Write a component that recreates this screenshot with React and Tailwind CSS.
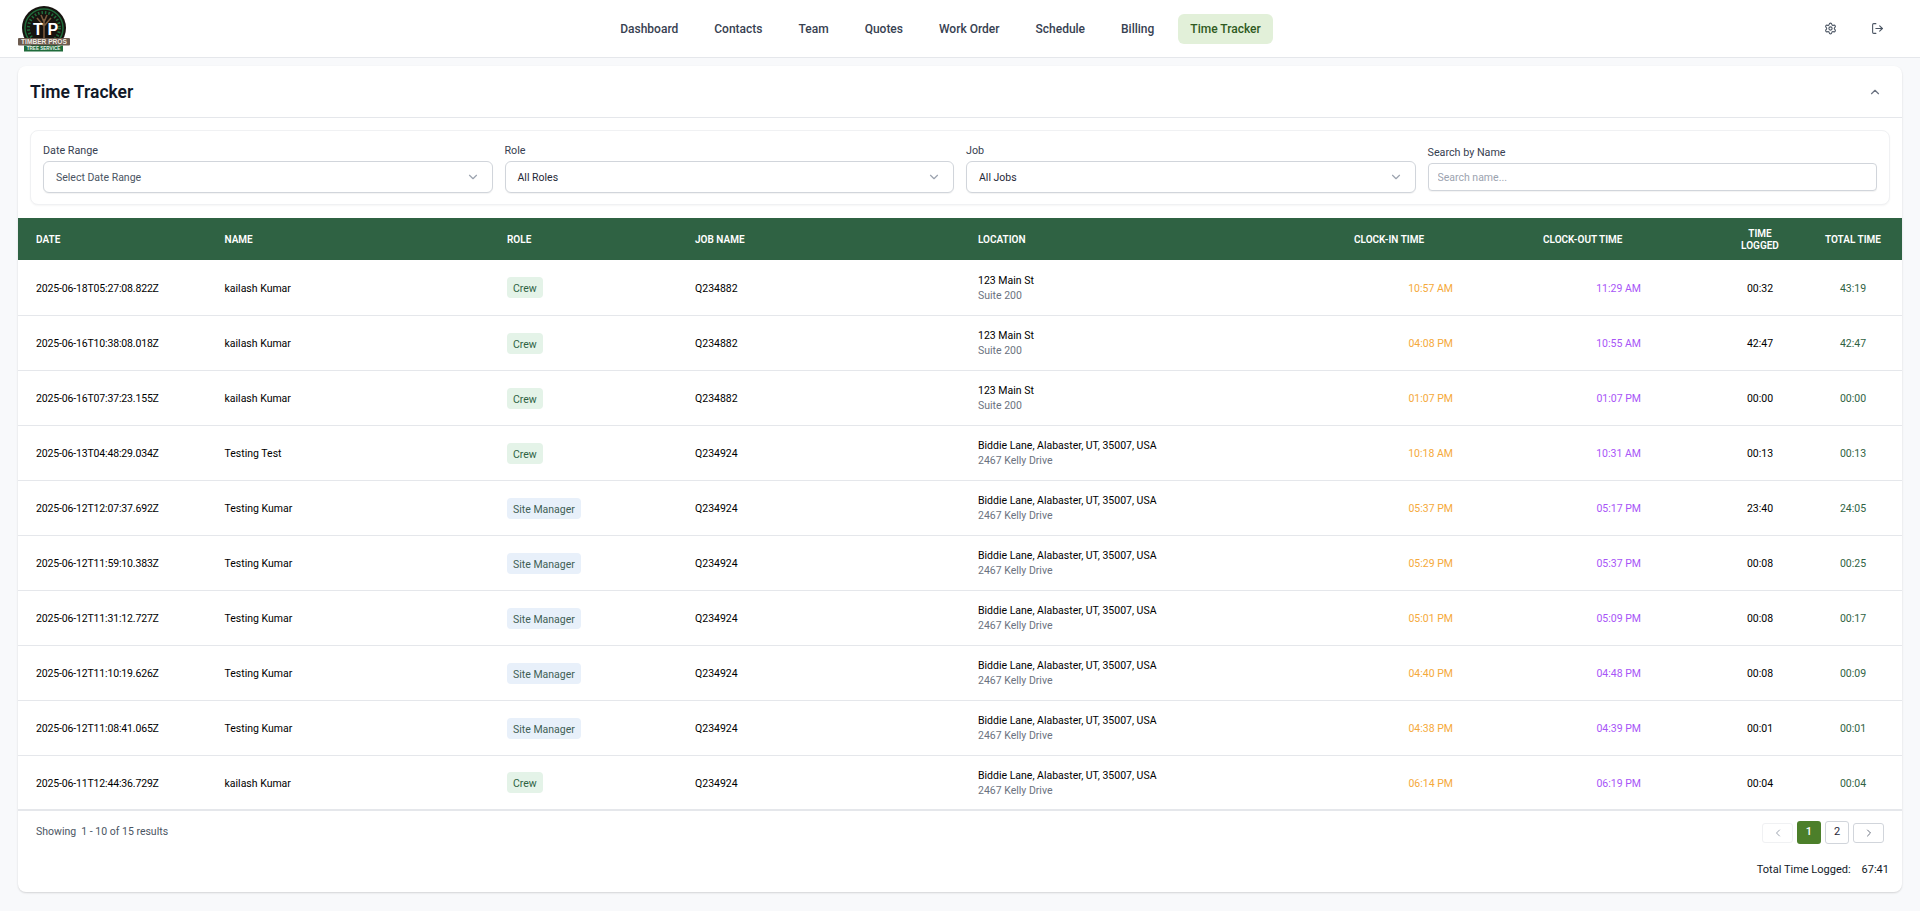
import { ChevronDown, ChevronUp, ChevronLeft, ChevronRight, Settings, LogOut } from "lucide-react";

const navItems = ["Dashboard", "Contacts", "Team", "Quotes", "Work Order", "Schedule", "Billing", "Time Tracker"];

const main = { street: "123 Main St", sub: "Suite 200" };
const biddie = { street: "Biddie Lane, Alabaster, UT, 35007, USA", sub: "2467 Kelly Drive" };

const rows = [
  { date: "2025-06-18T05:27:08.822Z", name: "kailash Kumar", role: "Crew", job: "Q234882", loc: main, inn: "10:57 AM", out: "11:29 AM", logged: "00:32", total: "43:19" },
  { date: "2025-06-16T10:38:08.018Z", name: "kailash Kumar", role: "Crew", job: "Q234882", loc: main, inn: "04:08 PM", out: "10:55 AM", logged: "42:47", total: "42:47" },
  { date: "2025-06-16T07:37:23.155Z", name: "kailash Kumar", role: "Crew", job: "Q234882", loc: main, inn: "01:07 PM", out: "01:07 PM", logged: "00:00", total: "00:00" },
  { date: "2025-06-13T04:48:29.034Z", name: "Testing Test", role: "Crew", job: "Q234924", loc: biddie, inn: "10:18 AM", out: "10:31 AM", logged: "00:13", total: "00:13" },
  { date: "2025-06-12T12:07:37.692Z", name: "Testing Kumar", role: "Site Manager", job: "Q234924", loc: biddie, inn: "05:37 PM", out: "05:17 PM", logged: "23:40", total: "24:05" },
  { date: "2025-06-12T11:59:10.383Z", name: "Testing Kumar", role: "Site Manager", job: "Q234924", loc: biddie, inn: "05:29 PM", out: "05:37 PM", logged: "00:08", total: "00:25" },
  { date: "2025-06-12T11:31:12.727Z", name: "Testing Kumar", role: "Site Manager", job: "Q234924", loc: biddie, inn: "05:01 PM", out: "05:09 PM", logged: "00:08", total: "00:17" },
  { date: "2025-06-12T11:10:19.626Z", name: "Testing Kumar", role: "Site Manager", job: "Q234924", loc: biddie, inn: "04:40 PM", out: "04:48 PM", logged: "00:08", total: "00:09" },
  { date: "2025-06-12T11:08:41.065Z", name: "Testing Kumar", role: "Site Manager", job: "Q234924", loc: biddie, inn: "04:38 PM", out: "04:39 PM", logged: "00:01", total: "00:01" },
  { date: "2025-06-11T12:44:36.729Z", name: "kailash Kumar", role: "Crew", job: "Q234924", loc: biddie, inn: "06:14 PM", out: "06:19 PM", logged: "00:04", total: "00:04" },
];

function Logo() {
  return (
    <svg width="52" height="46" viewBox="0 0 52 46">
      <circle cx="26" cy="22" r="22" fill="#17130f" />
      <circle cx="26" cy="22" r="19" fill="none" stroke="#1f6b3a" strokeWidth="1.5" />
      <circle cx="26" cy="22" r="15.5" fill="none" stroke="#1f6b3a" strokeWidth="3" strokeDasharray="1.5 2" />
      <path d="M26 36V13M26 20l-7-8M26 20l7-8M26 16l-3-7M26 16l3-7" stroke="#7a5a3c" strokeWidth="1.6" fill="none" />
      <text x="15" y="29" fontSize="16" fontWeight="700" fill="#fff" fontFamily="Liberation Sans, sans-serif">T</text>
      <text x="29.5" y="29" fontSize="16" fontWeight="700" fill="#fff" fontFamily="Liberation Sans, sans-serif">P</text>
      <rect x="0" y="32" width="52" height="7.5" rx="1" fill="#6d5c50" />
      <text x="26" y="38" fontSize="6.6" fontWeight="700" fill="#efe9e2" textAnchor="middle" fontFamily="Liberation Sans, sans-serif">TIMBER PROS</text>
      <rect x="6" y="39.5" width="39" height="6" fill="#1f6b3a" />
      <text x="25.5" y="44" fontSize="4.6" fontWeight="700" fill="#e8f3ea" textAnchor="middle" fontFamily="Liberation Sans, sans-serif">TREE SERVICE</text>
    </svg>
  );
}

function SelectBox({ label, value, muted }) {
  return (
    <div>
      <div className="h-[18px] pt-px text-[10.75px] leading-[14px] text-[#374151]">{label}</div>
      <div className="flex h-8 items-center justify-between rounded-md border border-[#d1d5db] bg-white pl-3 pr-3 shadow-[0_1px_1px_rgba(0,0,0,0.05)]">
        <span className={`pt-[2px] text-[10.5px] ${muted ? "text-[#4b5563]" : "text-[#1f2937]"}`}>{value}</span>
        <ChevronDown size={14} className="text-[#9ca3af]" />
      </div>
    </div>
  );
}

function RoleBadge({ role }) {
  const crew = role === "Crew";
  return (
    <span className={`inline-block h-[21px] rounded-[4px] px-[6px] pt-px text-[10.5px] leading-[21px] ${crew ? "bg-[#e4f3e8] text-[#2f6243]" : "bg-[#e8f0fa] text-[#3f5f55]"}`}>
      {role}
    </span>
  );
}

export default function App() {
  return (
    <div className="flex h-[911px] flex-col overflow-hidden bg-[#f8f9fb] font-['Roboto',sans-serif] text-black">
      {/* Navbar */}
      <header className="flex h-[58px] items-center justify-between border-b border-[#e5e7eb] bg-white pl-[18px] pr-6">
        <Logo />
        <nav className="flex gap-3">
          {navItems.map((item) => (
            <a
              key={item}
              className={`flex h-[30px] items-center rounded-md px-3 pt-px text-[12px] font-medium ${
                item === "Time Tracker" ? "bg-[#e2f0d9] text-[#2f5a22]" : "text-[#374151]"
              }`}
            >
              {item}
            </a>
          ))}
        </nav>
        <div className="flex gap-[9px]">
          <button className="flex h-8 w-[38px] items-center justify-center text-[#4b5563]">
            <Settings size={13} />
          </button>
          <button className="flex h-8 w-[38px] items-center justify-center text-[#4b5563]">
            <LogOut size={13} />
          </button>
        </div>
      </header>

      {/* Card */}
      <main className="mx-[18px] mt-2 flex h-[826px] flex-col rounded-lg bg-white shadow-[0_1px_2px_rgba(0,0,0,0.15)]">
        <div className="flex h-[52px] items-center justify-between border-b border-[#e5e7eb] pl-3 pr-5">
          <h1 className="pt-[2px] text-[17.5px] font-semibold text-[#111827]">Time Tracker</h1>
          <ChevronUp size={14} className="text-[#6b7280]" />
        </div>

        {/* Filters */}
        <div className="mx-3 mt-3 grid h-[75px] grid-cols-4 gap-3 rounded-lg border border-[#f0f1f3] bg-white px-3 pt-3 shadow-[0_1px_2px_rgba(0,0,0,0.04)]">
          <SelectBox label="Date Range" value="Select Date Range" muted />
          <SelectBox label="Role" value="All Roles" />
          <SelectBox label="Job" value="All Jobs" />
          <div>
            <div className="h-5 pt-[3px] text-[10.75px] leading-[14px] text-[#374151]">Search by Name</div>
            <input
              placeholder="Search name..."
              className="h-[28px] w-full rounded border border-[#d1d5db] bg-white px-[9px] text-[10.5px] shadow-[0_1px_1px_rgba(0,0,0,0.05)] placeholder:text-[#9ca3af]"
            />
          </div>
        </div>

        {/* Table */}
        <table className="mt-[13px] w-full table-fixed border-collapse text-[10.5px]">
          <colgroup>
            <col className="w-[188.5px]" />
            <col className="w-[282.5px]" />
            <col className="w-[188px]" />
            <col className="w-[283px]" />
            <col className="w-[376px]" />
            <col className="w-[189px]" />
            <col className="w-[191px]" />
            <col className="w-[88px]" />
            <col className="w-[98px]" />
          </colgroup>
          <thead>
            <tr className="h-[42px] bg-[#2f6243] text-left text-[10px] font-semibold uppercase leading-3 text-white">
              <th className="pl-[18px] pt-[2px] font-semibold">Date</th>
              <th className="pl-[18px] pt-[2px] font-semibold">Name</th>
              <th className="pl-[18px] pt-[2px] font-semibold">Role</th>
              <th className="pl-[18px] pt-[2px] font-semibold">Job Name</th>
              <th className="pl-[18px] pt-[2px] font-semibold">Location</th>
              <th className="pl-[18px] pt-[2px] font-semibold">Clock-In Time</th>
              <th className="pl-[18px] pt-[2px] font-semibold">Clock-Out Time</th>
              <th className="pt-[2px] text-center font-semibold">Time<br />Logged</th>
              <th className="pt-[2px] text-center font-semibold">Total Time</th>
            </tr>
          </thead>
          <tbody>
            {rows.map((r) => (
              <tr key={r.date} className="h-[55px] border-b border-[#e5e7eb] last:border-b-2">
                <td className="pl-[18px] pt-[3px] tracking-[-0.015em]">{r.date}</td>
                <td className="pl-[18px] pt-[3px]">{r.name}</td>
                <td className="pl-[18px] pt-px"><RoleBadge role={r.role} /></td>
                <td className="pl-[18px] pt-[3px]">{r.job}</td>
                <td className="pl-[18px] pt-px leading-[15px]">
                  <div>{r.loc.street}</div>
                  <div className="text-[#6b7280]">{r.loc.sub}</div>
                </td>
                <td className="pr-[72px] pt-[3px] text-right text-[#f5a93a]">{r.inn}</td>
                <td className="pr-[75px] pt-[3px] text-right text-[#a855f7]">{r.out}</td>
                <td className="pt-[3px] text-center">{r.logged}</td>
                <td className="pt-[3px] text-center text-[#2f6243]">{r.total}</td>
              </tr>
            ))}
          </tbody>
        </table>

        {/* Footer */}
        <div className="flex items-start justify-between pl-[18px] pr-[18px] pt-[10px]">
          <div className="pt-[3px] text-[10.5px] text-[#4b5563]">Showing&nbsp; 1 - 10 of 15 results</div>
          <div className="flex items-center gap-1 text-[11px]">
            <button className="flex h-5 w-[31px] items-center justify-center rounded-[3px] border border-[#f0f1f3] text-[#9ca3af]">
              <ChevronLeft size={12} />
            </button>
            <button className="flex h-[23px] w-6 items-center justify-center rounded-[3px] bg-[#4c7f2a] font-medium text-white">1</button>
            <button className="flex h-[23px] w-6 items-center justify-center rounded-[3px] border border-[#d1d5db] text-[#1f2937]">2</button>
            <button className="flex h-5 w-[31px] items-center justify-center rounded-[3px] border border-[#d1d5db] text-[#6b7280]">
              <ChevronRight size={12} />
            </button>
          </div>
        </div>
        <div className="mt-[18px] flex justify-end gap-[11px] pr-[13px] text-[11px] text-[#111827]">
          <span>Total Time Logged:</span>
          <span>67:41</span>
        </div>
      </main>
    </div>
  );
}
